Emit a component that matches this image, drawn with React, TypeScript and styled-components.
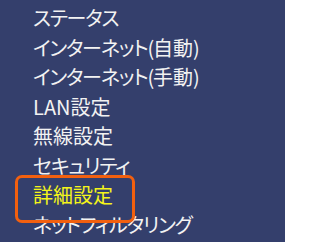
import styled, { createGlobalStyle } from "styled-components";

const GlobalStyle = createGlobalStyle`
  html, body {
    margin: 0;
    padding: 0;
    background: #ffffff;
  }
`;

const items = [
  'ステータス',
  'インターネット(自動)',
  'インターネット(手動)',
  'LAN設定',
  '無線設定',
  'セキュリティ',
  '詳細設定',
  'ネットフィルタリング',
];

const selected = 6;

// kana and brackets are set tighter than kanji, like the original UI font
const splitRuns = (text: string) => text.split(/([\u30A0-\u30FF()]+)/).filter(Boolean);

const App = () => {
  return <>
    <GlobalStyle />
    <Panel>
      <Menu>
        {
          items.map((item, index) => {
            return <MenuItem key={item} $active={index === selected}>
              {splitRuns(item).map((run, i) =>
                /[\u30A0-\u30FF()]/.test(run) ? <Kana key={i}>{run}</Kana> : <span key={i}>{run}</span>
              )}
            </MenuItem>
          })
        }
      </Menu>
      <Highlight />
    </Panel>
  </>
}

const Panel = styled.div`
  position: relative;
  width: 285px;
  height: 242px;
  overflow: hidden;
  background-color: #343f6c;
`

const Menu = styled.ul`
  list-style: none;
  margin: 0;
  padding: 3px 0 0 33px;
  display: flex;
  flex-direction: column;
`

const MenuItem = styled.li<{ $active: boolean }>`
  height: 29.5px;
  line-height: 29.5px;
  font-family: "Noto Sans CJK JP", "Noto Sans", sans-serif;
  font-size: 20px;
  font-feature-settings: "palt";
  white-space: nowrap;
  color: ${p => p.$active ? '#f5f51a' : '#f2f2f2'};
`

const Kana = styled.span`
  letter-spacing: -1.2px;
`

const Highlight = styled.div`
  position: absolute;
  left: 15px;
  top: 175px;
  width: 120px;
  height: 48px;
  box-sizing: border-box;
  border: 3px solid #f2600f;
  border-radius: 7px;
`

export default App
